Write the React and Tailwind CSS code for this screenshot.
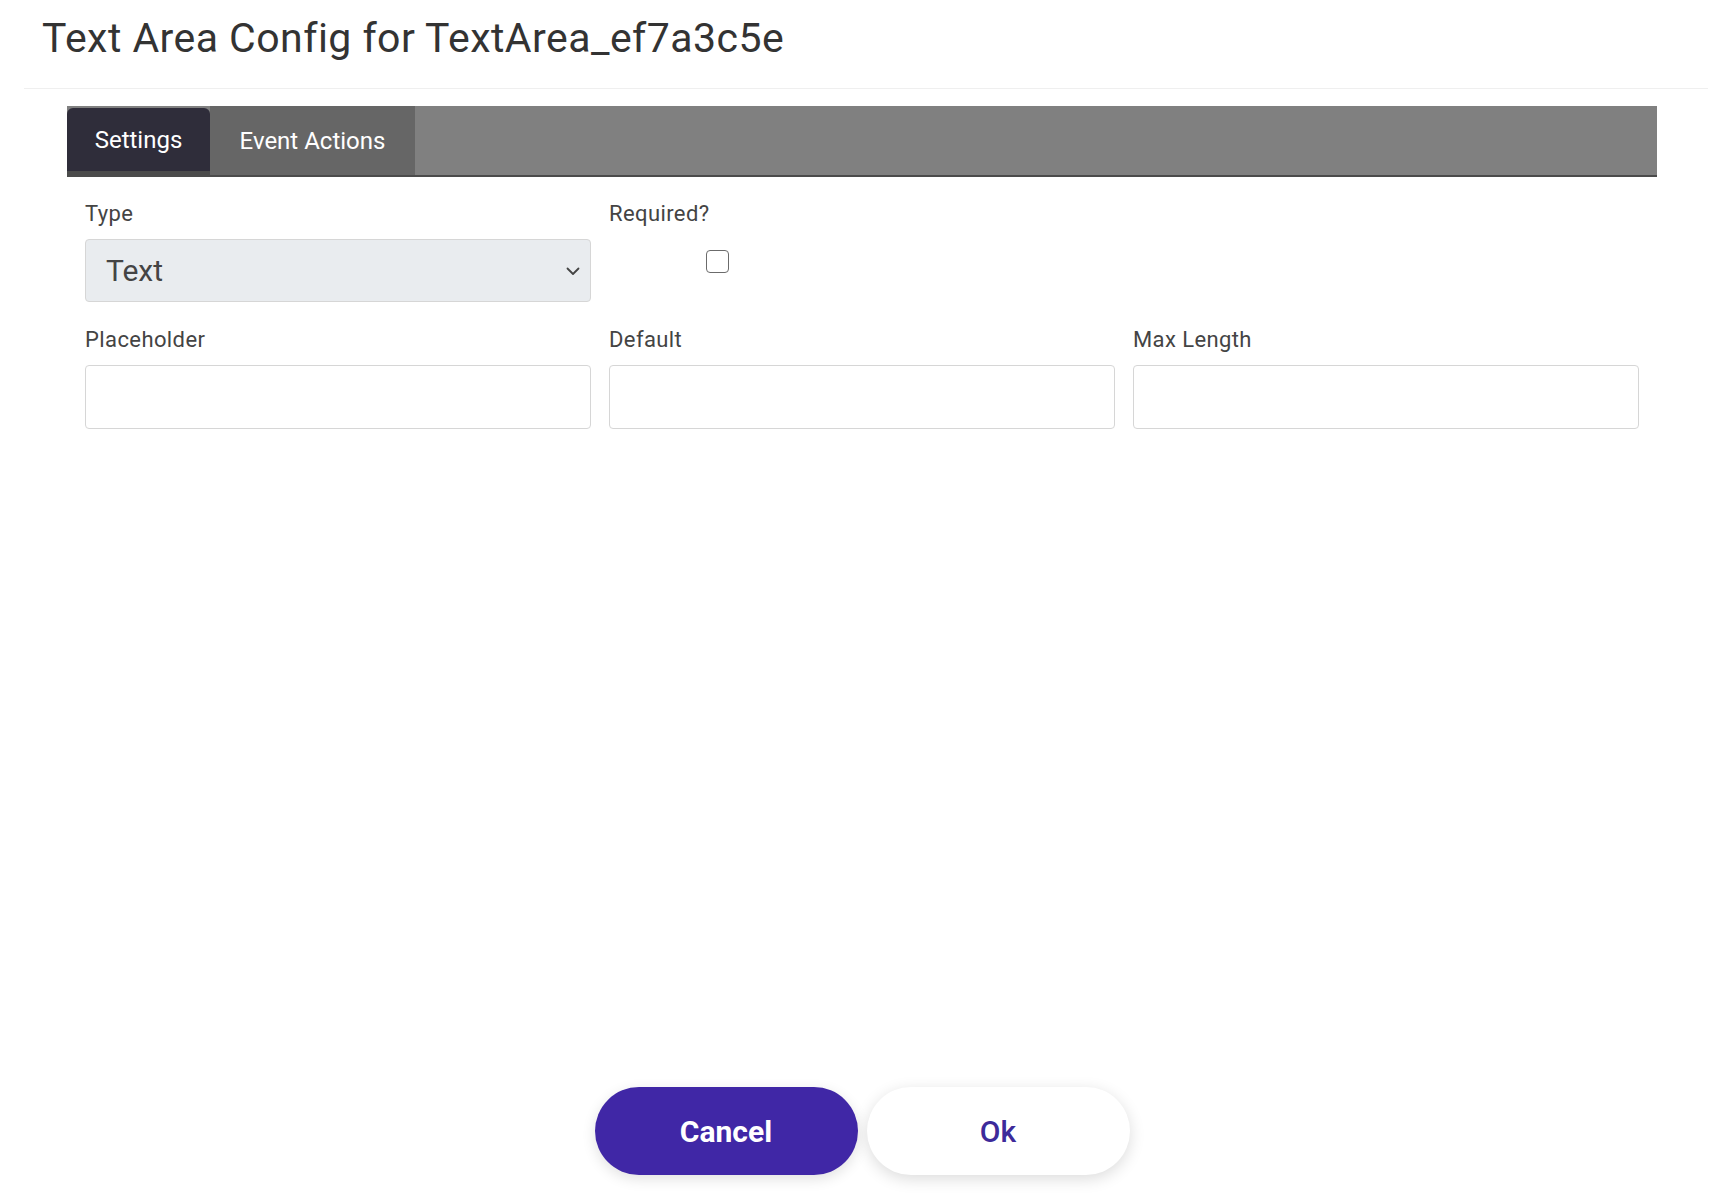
import React from "react";

function Field({ label, children }) {
  return (
    <div className="flex flex-col">
      <label className="text-[22px] leading-[26px] text-[#444] tracking-[0.4px] mb-[12px]">{label}</label>
      {children}
    </div>
  );
}

export default function App() {
  return (
    <div className="w-[1713px] h-[1198px] bg-white flex flex-col" style={{ fontFamily: "Roboto, 'Liberation Sans', sans-serif" }}>
      <div className="ml-[24px] mr-[5px] border-b border-[#efefef] pl-[18px] pt-[11px] pb-[23px]">
        <h1 className="text-[41px] leading-[54px] text-[#333] tracking-[0.45px] font-normal">Text Area Config for TextArea_ef7a3c5e</h1>
      </div>
      <div className="ml-[24px] mr-[5px] flex-1 flex flex-col">
        <div className="ml-[43px] mr-[51px] mt-[17px] h-[71px] bg-[#808080] border-b-2 border-[#4b4b4b] flex items-stretch">
          <div className="w-[143px] bg-[#2f2d3a] rounded-t-[6px] mt-[2px] flex flex-col">
            <div className="flex-1 flex items-center justify-center text-white text-[24px]">Settings</div>
            <div className="h-[4px] bg-[#4b4b4b]"></div>
          </div>
          <div className="w-[205px] bg-[#666666] flex items-center justify-center text-white text-[24px]">Event Actions</div>
        </div>
        <div className="ml-[61px] mr-[69px] mt-[24px] grid grid-cols-3 gap-x-[18px] gap-y-[25px]">
          <Field label="Type">
            <div className="h-[63px] bg-[#e9ecef] border border-[#d6d6d6] rounded-[4px] flex items-center justify-between pl-[20px] pr-[8px]">
              <span className="text-[30px] text-[#444]">Text</span>
              <svg width="18" height="16" viewBox="0 0 18 16" fill="none" stroke="#444" strokeWidth="1.8" strokeLinecap="round" strokeLinejoin="round"><path d="M3.5 5.5l5.5 5.5 5.5-5.5" /></svg>
            </div>
          </Field>
          <Field label="Required?">
            <div className="h-[63px] flex items-start pt-[11px] pl-[97px]">
              <div className="w-[23px] h-[23px] border-[1.5px] border-[#6b6b6b] rounded-[4px] bg-white"></div>
            </div>
          </Field>
          <div></div>
          <Field label="Placeholder">
            <div className="h-[64px] bg-white border border-[#d6d6d6] rounded-[4px]"></div>
          </Field>
          <Field label="Default">
            <div className="h-[64px] bg-white border border-[#d6d6d6] rounded-[4px]"></div>
          </Field>
          <Field label="Max Length">
            <div className="h-[64px] bg-white border border-[#d6d6d6] rounded-[4px]"></div>
          </Field>
        </div>
        <div className="flex-1"></div>
        <div className="flex justify-center gap-[9px] mb-[23px] mr-[8px]">
          <button className="w-[263px] h-[88px] rounded-full bg-[#4027a6] text-white text-[30px] font-bold shadow-[0_4px_14px_rgba(0,0,0,0.12)]">Cancel</button>
          <button className="w-[263px] h-[88px] rounded-full bg-white text-[#3d2a9a] text-[30px] font-medium shadow-[0_4px_16px_rgba(0,0,0,0.14)]">Ok</button>
        </div>
      </div>
    </div>
  );
}
